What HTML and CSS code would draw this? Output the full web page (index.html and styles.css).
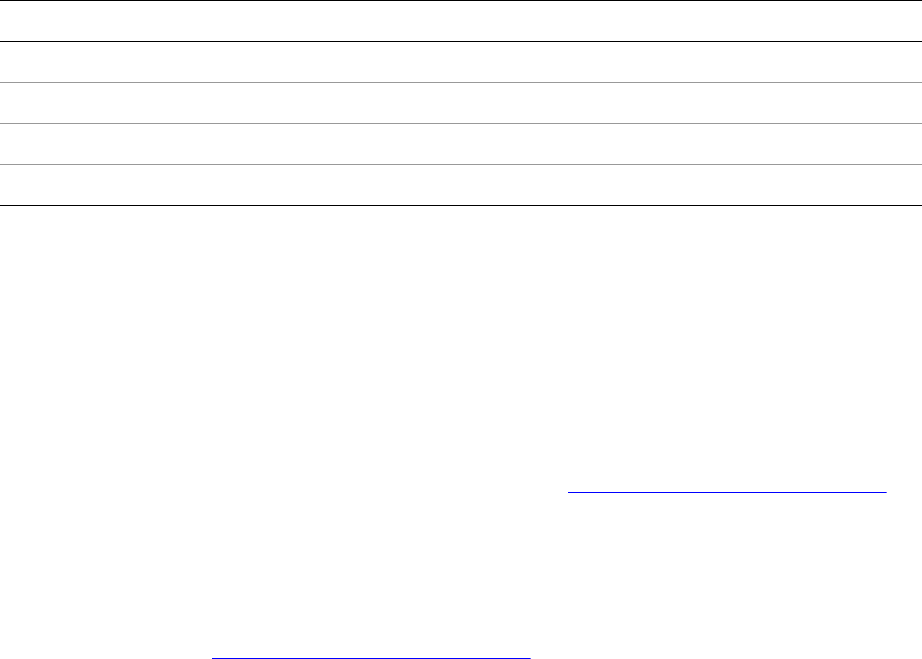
FILE: index.html
```html
<!DOCTYPE html>
<html lang="en">
<head>
<meta charset="utf-8">
<title>Reference</title>
<link rel="stylesheet" href="styles.css">
</head>
<body>
<table class="data">
  <thead>
    <tr><th>Name</th><th>Type</th><th>Description</th></tr>
  </thead>
  <tbody>
    <tr><td>id</td><td>string</td><td>Identifier</td></tr>
    <tr><td>title</td><td>string</td><td>Title</td></tr>
    <tr><td>created</td><td>date</td><td>Creation date</td></tr>
    <tr><td>status</td><td>enum</td><td>Status</td></tr>
  </tbody>
</table>
<section class="notes">
  <p class="note note-first"><a class="ref" href="#">https://www.example.com/documentation/api</a></p>
  <p class="note note-second"><a class="ref" href="#">https://www.example.com/documentation/api</a></p>
</section>
</body>
</html>
```
FILE: styles.css
```css
html, body {
  margin: 0;
  padding: 0;
  background: #fff;
}
body {
  font-family: "Liberation Sans", Arial, sans-serif;
  font-size: 16px;
  color: #fff;
}
.data {
  width: 100%;
  border-collapse: collapse;
  border-top: 1px solid #000;
  border-bottom: 1px solid #000;
}
.data th,
.data td {
  height: 41px;
  padding: 0 8px;
  text-align: left;
  font-weight: normal;
  color: #fff;
  box-sizing: border-box;
}
.data thead th {
  border-bottom: 1px solid #000;
}
.data tbody tr + tr td {
  border-top: 1px solid #999;
}
.notes {
  display: flex;
  flex-direction: column;
}
.note {
  margin: 0;
  line-height: 18px;
}
.note-first {
  padding-top: 271px;
  padding-left: 568px;
}
.note-second {
  padding-top: 148px;
  padding-left: 212px;
}
.ref {
  color: transparent;
  text-decoration: underline;
  text-decoration-color: #00f;
  text-decoration-skip-ink: none;
  letter-spacing: 0.05px;
}
```
